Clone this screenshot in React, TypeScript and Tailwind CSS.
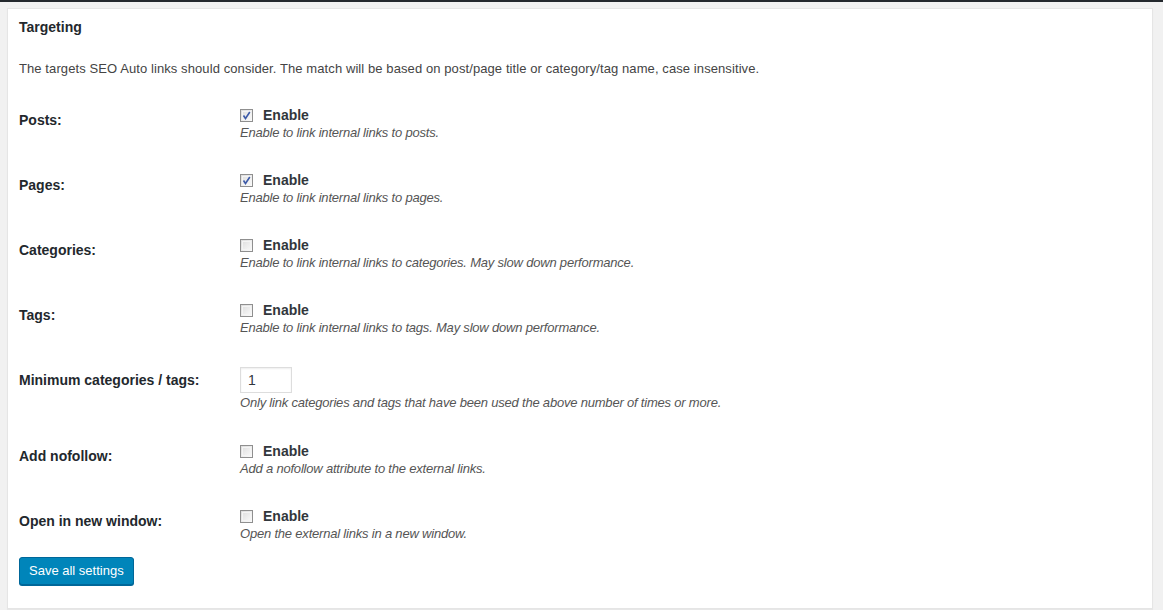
import React from 'react';

type Row = {
  label: string;
  kind: 'check' | 'number';
  checked?: boolean;
  desc: string;
};

const rows: Row[] = [
  { label: 'Posts:', kind: 'check', checked: true, desc: 'Enable to link internal links to posts.' },
  { label: 'Pages:', kind: 'check', checked: true, desc: 'Enable to link internal links to pages.' },
  { label: 'Categories:', kind: 'check', desc: 'Enable to link internal links to categories. May slow down performance.' },
  { label: 'Tags:', kind: 'check', desc: 'Enable to link internal links to tags. May slow down performance.' },
  {
    label: 'Minimum categories / tags:',
    kind: 'number',
    desc: 'Only link categories and tags that have been used the above number of times or more.',
  },
  { label: 'Add nofollow:', kind: 'check', desc: 'Add a nofollow attribute to the external links.' },
  { label: 'Open in new window:', kind: 'check', desc: 'Open the external links in a new window.' },
];

// windows-ish checkbox, the way the old admin renders it
function Checkbox({ checked }: { checked?: boolean }) {
  return (
    <span className="relative inline-block h-[13px] w-[13px] border border-[#8f8f8f] bg-gradient-to-br from-[#dcdcdc] to-[#fbfbfb]">
      <span className="absolute inset-[1px] border border-[#f4f4f4]" />
      {checked && (
        <svg viewBox="0 0 11 11" className="absolute left-0 top-0 h-[11px] w-[11px]">
          <path d="M2.5 5.5 L4.5 8.5 L8.8 2" fill="none" stroke="#3c5aa8" strokeWidth="1.6" />
        </svg>
      )}
    </span>
  );
}

export default function App() {
  return (
    <div className="min-h-[610px] bg-[#f1f1f1] font-['Liberation_Sans',Arial,sans-serif] text-[13px] text-[#444]">
      <div className="h-[2px] bg-[#23282d]" />
      <div className="px-[7px] pt-[6px]">
        <div className="w-[1146px] border border-[#e5e5e5] bg-white px-[11px] shadow-[0_1px_1px_rgba(0,0,0,0.04)]">
          <h2 className="pt-[9px] text-[14px] font-bold leading-[18px] text-[#23282d]">Targeting</h2>

          <p className="mt-[24px] leading-[18px] tracking-[0.09px]">
            The targets SEO Auto links should consider. The match will be based on post/page title or category/tag name,
            case insensitive.
          </p>

          <div className="mt-[13px]">
            {rows.map((row) => (
              <div key={row.label} className="flex">
                <div className="w-[221px] shrink-0 pt-[20px] text-[14px] font-bold leading-[18px] text-[#23282d]">
                  {row.label}
                </div>
                <div className={row.kind === 'number' ? 'pt-[16px] pb-[16px]' : 'py-[15px]'}>
                  {row.kind === 'check' ? (
                    <label className="flex h-[18px] items-center">
                      <Checkbox checked={row.checked} />
                      <span className="ml-[10px] text-[14px] font-bold text-[#32373c]">Enable</span>
                    </label>
                  ) : (
                    <input
                      type="number"
                      defaultValue={1}
                      className="h-[26px] w-[52px] border border-[#ddd] px-[7px] text-[14px] text-[#32373c] shadow-[inset_0_1px_2px_rgba(0,0,0,0.07)] outline-none [appearance:textfield]"
                    />
                  )}
                  <p
                    className={`${row.kind === 'number' ? 'mt-[1px]' : ''} leading-[17px] italic tracking-[-0.2px] text-[#555]`}
                  >
                    {row.desc}
                  </p>
                </div>
              </div>
            ))}
          </div>

          <button
            type="button"
            className="mb-[23px] h-[28px] rounded-[3px] border border-[#006799] bg-[#0085ba] px-[9px] text-[13px] leading-[26px] text-white shadow-[0_1px_0_#006799]"
          >
            Save all settings
          </button>
        </div>
      </div>
    </div>
  );
}
